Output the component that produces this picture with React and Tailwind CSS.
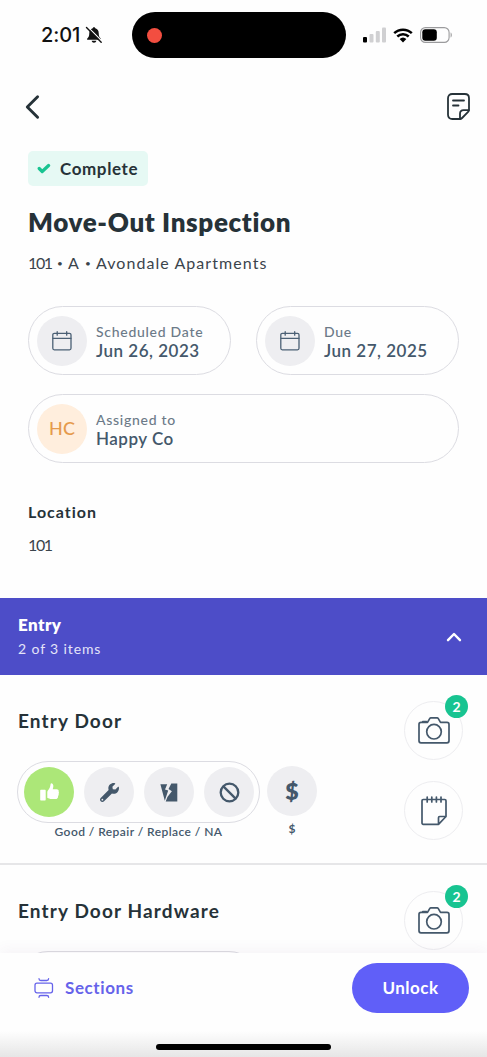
const ratings = ["good", "repair", "replace", "na"];

function StatusBar() {
  return (
    <div className="flex h-[70px] items-center">
      <div className="flex w-[132px] items-center pl-[41px]">
        <span className="w-[40px] whitespace-nowrap font-['Inter',sans-serif] text-[20px] font-medium leading-6 tracking-[-0.1px] text-[#111]">2:01</span>
        <svg className="ml-1 h-[18px] w-[18px]" viewBox="0 0 18 18">
          <path d="M9 1.200c.8 0 1.200.5 1.300 1.100 2.200.6 3.400 2.400 3.400 4.700 0 3.300.7 4.300 2 5.400.5.500.3 1.300-.5 1.300H2.800c-.8 0-1-.8-.5-1.300 1.300-1.100 2-2.100 2-5.400 0-2.300 1.200-4.100 3.400-4.700C7.800 1.700 8.200 1.200 9 1.200zM6.600 14.700h4.800c-.3 1.300-1.200 2-2.400 2s-2.100-.7-2.400-2z" fill="#111" />
          <path d="M3.200 1.400 17.800 16" stroke="#fff" strokeWidth="1.200" />
          <path d="M1.500 1.600 16.200 16.200" stroke="#111" strokeWidth="1.400" strokeLinecap="round" />
        </svg>
      </div>
      <div className="flex h-[46px] w-[214px] items-center rounded-full bg-black pl-[15px]">
        <span className="size-[15px] rounded-full bg-[#f24e40]" />
      </div>
      <div className="flex items-center pl-[17px]">
        <svg className="h-4 w-[23px]" viewBox="0 0 23 16">
          <rect x="0" y="10" width="4" height="5.500" rx="1" fill="#000" />
          <rect x="6.500" y="7" width="4" height="8.500" rx="1" fill="#d0d0d2" />
          <rect x="12.800" y="4" width="4" height="11.500" rx="1" fill="#d0d0d2" />
          <rect x="19" y="0.500" width="4" height="15" rx="1" fill="#d0d0d2" />
        </svg>
        <svg className="ml-[7px] h-[15px] w-[20px]" viewBox="0 0 20 15">
          <path d="M1.200 5.200a12.700 12.700 0 0 1 17.600 0M4.300 8.500a8.200 8.200 0 0 1 11.400 0" fill="none" stroke="#000" strokeWidth="2.500" />
          <path d="M6.600 11a5 5 0 0 1 6.800 0L10 14.500z" fill="#000" />
        </svg>
        <svg className="ml-[7px] h-[16px] w-[33px]" viewBox="0 0 33 16">
          <rect x="0.600" y="0.600" width="28.500" height="14.800" rx="4.800" fill="none" stroke="#9b9b9d" strokeWidth="1.100" />
          <rect x="2.300" y="2.300" width="14.500" height="11.400" rx="3" fill="#000" />
          <path d="M30.600 5.500c1.600.6 1.600 4.400 0 5z" fill="#9b9b9d" />
        </svg>
      </div>
    </div>
  );
}

function CalendarIcon() {
  return (
    <svg className="h-5 w-5" viewBox="0 0 20 20" fill="none" stroke="#4b6075" strokeWidth="1.300" strokeLinecap="round">
      <rect x="0.800" y="2.300" width="18.200" height="16.500" rx="1.500" />
      <path d="M1 7.300h18M5.200.7v3.500M14.700.7v3.500" />
    </svg>
  );
}

function CameraIcon() {
  return (
    <svg className="h-[27px] w-[32px]" viewBox="0 0 32 27" fill="none" stroke="#44586b" strokeWidth="1.700" strokeLinejoin="round" strokeLinecap="round">
      <path d="M3 5.400h6.500l2.200-3.800c.3-.5.700-.7 1.200-.7h6.200c.5 0 .9.200 1.200.7l2.200 3.800H29c1.200 0 2 .8 2 2v16.400c0 1.200-.8 2-2 2H3c-1.200 0-2-.8-2-2V7.400c0-1.200.8-2 2-2z" />
      <path d="M4.800 4.600h3.700" strokeWidth="1.800" />
      <circle cx="16" cy="14.700" r="7.300" />
    </svg>
  );
}

function NotepadIcon() {
  return (
    <svg className="h-[30px] w-[26px]" viewBox="0 0 26 30" fill="none" stroke="#44586b" strokeWidth="1.700" strokeLinejoin="round" strokeLinecap="round">
      <path d="M17.500 28.300H2.200c-.7 0-1.200-.5-1.200-1.200V4.700c0-.7.500-1.200 1.200-1.200h21.600c.7 0 1.200.5 1.200 1.200v15.800zM17.500 28.300v-6.600c0-.7.500-1.200 1.200-1.200H25" />
      <path d="M6.200 1v5M10.800 1v5M15.400 1v5M20 1v5" />
    </svg>
  );
}

function RatingIcon({ type }) {
  if (type === "good") {
    return (
      <svg className="h-[18px] w-[19px]" viewBox="0 0 19 18" fill="#fff">
        <path d="M1.200 6.800h3.500c.6 0 1 .4 1 1v8.700c0 .6-.4 1-1 1H1.200c-.6 0-1-.4-1-1V7.800c0-.6.4-1 1-1z" />
        <path d="M7.300 9c0-.9.400-1.400 1-2.100C9.600 5.400 10.300 3.900 10.500 1.600c.1-1 .6-1.400 1.300-1.200 1.300.3 1.700 1.700 1.500 3.200-.1 1-.3 1.800-.6 2.600h4c1.500 0 2.300 1.200 1.900 2.300.4.600.5 1.500 0 2.200.3.900.1 1.700-.5 2.200.1 1.900-.8 3.200-2.800 3.200h-3.500c-2.300 0-3.200-1-4.500-1.400z" />
      </svg>
    );
  }
  if (type === "repair") {
    return (
      <svg className="h-[19px] w-[19px]" viewBox="0 0 512 512" fill="#44586b">
        <path d="M507.700 109.100c-2.200-9-13.500-12.100-20.100-5.500l-74.400 74.400-67.900-11.300L334 98.900l74.400-74.400c6.600-6.600 3.400-17.900-5.700-20.200-47.400-11.700-99.600.9-136.600 37.900-39.600 39.600-50.500 97.100-34.100 147.200L18.700 402.800c-25 25-25 65.500 0 90.500s65.500 25 90.500 0l213.200-213.200c50.100 16.700 107.500 5.700 147.400-34.200 37.100-37.100 49.700-89.300 37.900-136.800zM64 472a24 24 0 1 1 0-48 24 24 0 0 1 0 48z" />
      </svg>
    );
  }
  if (type === "replace") {
    return (
      <svg className="h-[19px] w-[18px]" viewBox="0 0 18 19" fill="#44586b">
        <path d="M.4 1.200h6.800L5 6.500l3.200 1-3.400 10.300z" />
        <path d="M11.300.4h6v18.200H5.700L7.400 14l4.500-5.800-3.400-2.200z" />
      </svg>
    );
  }
  return (
    <svg className="h-[21px] w-[21px]" viewBox="0 0 21 21" fill="none" stroke="#44586b" strokeWidth="2.300">
      <circle cx="10.500" cy="10.500" r="8.800" />
      <path d="M4.400 4.400l12.200 12.200" />
    </svg>
  );
}

function InfoPill({ label, value, extraClass, children }) {
  return (
    <div className={`flex h-[69px] items-center rounded-full border border-[#dcdce2] pl-2 ${extraClass}`}>
      {children}
      <div className="ml-[9px] whitespace-nowrap">
        <p className="text-[14px] font-medium leading-[19px] tracking-[0.720px] text-[#6c7a88]">{label}</p>
        <p className="text-[17px] font-semibold leading-[19px] tracking-[0.500px] text-[#44586b]">{value}</p>
      </div>
    </div>
  );
}

function RoundAction({ count, children }) {
  return (
    <div className="relative flex size-[59px] items-center justify-center rounded-full border border-[#ededf0]">
      {children}
      {count && (
        <span className="absolute -right-[6px] -top-[7px] flex size-[23px] items-center justify-center rounded-full bg-[#18c491] text-[14px] font-bold text-white">
          {count}
        </span>
      )}
    </div>
  );
}

function InspectionItem({ title }) {
  return (
    <section className="flex h-[190px] shrink-0 justify-between border-b-2 border-[#e6e6e8] pl-[17px] pr-6">
      <div>
        <h3 className="mt-[34px] pl-px text-[19px] font-bold leading-6 tracking-[1.130px] text-[#263238]">{title}</h3>
        <div className="mt-[28px] flex">
          <div className="w-[243px]">
            <div className="flex h-[62px] items-center gap-[10px] rounded-full border border-[#dcdce2] pl-[6px]">
              {ratings.map((type) => (
                <span
                  key={type}
                  className={`flex size-[50px] items-center justify-center rounded-full ${type === "good" ? "bg-[#ace778]" : "bg-[#eeeef1]"}`}
                >
                  <RatingIcon type={type} />
                </span>
              ))}
            </div>
            <p className="mt-px text-center text-[12px] font-semibold leading-4 tracking-[0.430px] text-[#44586b]">
              Good / Repair / Replace / NA
            </p>
          </div>
          <div className="ml-[7px] mt-[5px] w-[50px] text-center font-bold text-[#44586b]">
            <p className="size-[50px] rounded-full bg-[#eeeef1] text-[23px] font-extrabold leading-[50px]">$</p>
            <p className="mt-[5px] text-[12px] leading-4">$</p>
          </div>
        </div>
      </div>
      <div className="flex flex-col gap-[21px] pt-[26px]">
        <RoundAction count={2}><CameraIcon /></RoundAction>
        <RoundAction><NotepadIcon /></RoundAction>
      </div>
    </section>
  );
}

export default function App() {
  return (
    <main className="relative flex h-[1057px] w-[487px] flex-col overflow-hidden bg-[#fefefe] font-['Lato','Liberation_Sans',sans-serif] text-[#263238]">
      <StatusBar />

      <header className="flex h-[73px] items-center justify-between pl-[25px] pr-[17px]">
        <svg className="h-[26px] w-[16px]" viewBox="0 0 16 26" fill="none" stroke="#263238" strokeWidth="2.900" strokeLinecap="round" strokeLinejoin="round">
          <path d="M12.600 2.700 2.300 13 12.600 23.300" />
        </svg>
        <svg className="h-[27px] w-[23px]" viewBox="0 0 23 27" fill="none" stroke="#263238" strokeWidth="1.800" strokeLinecap="round" strokeLinejoin="round">
          <path d="M13 26H5.200C2.700 26 1 24.300 1 21.800V5.200C1 2.700 2.700 1 5.200 1h12.600C20.300 1 22 2.700 22 5.200v11.500c0 .8-.3 1.500-.9 2.100l-6 6.200c-.6.600-1.300 1-2.100 1z" />
          <path d="M13 25.800v-5c0-2.300 1.300-3.600 3.600-3.600h5.200M6 7.500h11M6 12.500h5.500" />
        </svg>
      </header>

      <section className="px-7 pt-2">
        <div className="flex h-[35px] w-[120px] items-center rounded-[5px] bg-[#e6f9f4] pl-[9px]">
          <svg className="h-[11px] w-[14px]" viewBox="0 0 14 11" fill="none" stroke="#18c491" strokeWidth="3.200" strokeLinecap="round" strokeLinejoin="round">
            <path d="M2.200 5.500 5.200 8.500 11.600 2.500" />
          </svg>
          <span className="ml-[9px] text-[17px] font-bold tracking-[0.600px]">Complete</span>
        </div>
        <h1 className="mt-[20px] whitespace-nowrap text-[26px] font-extrabold leading-8 tracking-[0.640px]">Move-Out Inspection</h1>
        <p className="mt-[13px] flex whitespace-nowrap text-[16px] leading-6 text-[#3b444c]">
          <span className="w-[29px] tracking-[-1.400px]">101</span>
          <span className="w-[11px] text-[10px]">•</span>
          <span className="w-[17px]">A</span>
          <span className="w-[11px] text-[10px]">•</span>
          <span className="tracking-[1.060px]">Avondale Apartments</span>
        </p>

        <div className="mt-[31px] flex gap-[25px]">
          <InfoPill label="Scheduled Date" value="Jun 26, 2023" extraClass="w-[203px]">
            <span className="flex size-[50px] items-center justify-center rounded-full bg-[#eeeef1]"><CalendarIcon /></span>
          </InfoPill>
          <InfoPill label="Due" value="Jun 27, 2025" extraClass="w-[203px]">
            <span className="flex size-[50px] items-center justify-center rounded-full bg-[#eeeef1]"><CalendarIcon /></span>
          </InfoPill>
        </div>
        <InfoPill label="Assigned to" value="Happy Co" extraClass="mt-[19px] w-[431px]">
          <span className="flex size-[50px] items-center justify-center rounded-full bg-[#ffeedd] text-[18px] font-medium text-[#e59a4c]">HC</span>
        </InfoPill>

        <h2 className="mt-[37px] text-[16px] font-bold leading-6 tracking-[1px]">Location</h2>
        <p className="mt-[9px] text-[16px] leading-6 tracking-[-1.400px] text-[#3b444c]">101</p>
      </section>

      <section className="mt-[41px] flex h-[77px] shrink-0 items-center justify-between bg-[#4d4dc8] pl-[18px] pr-[25px] text-white">
        <div>
          <h2 className="text-[17px] font-extrabold leading-6 tracking-[0.400px]">Entry</h2>
          <p className="text-[14px] leading-6 tracking-[0.880px] text-[#e4e4f8]">2 of 3 items</p>
        </div>
        <svg className="h-[10px] w-[16px]" viewBox="0 0 16 10" fill="none" stroke="#fff" strokeWidth="2.400" strokeLinecap="round" strokeLinejoin="round">
          <path d="M2 8.200 8 2l6 6.200" />
        </svg>
      </section>

      <InspectionItem title="Entry Door" />
      <InspectionItem title="Entry Door Hardware" />

      <footer className="absolute inset-x-0 bottom-0 flex h-[104px] flex-col items-center bg-linear-to-b from-[#fefefe] from-75% to-[#e6e6e6] shadow-[0_-4px_12px_rgba(90,60,110,0.05)]">
        <div className="flex w-full items-center justify-between pl-[34px] pr-[18px] pt-[10px]">
          <button className="flex items-center text-[#6663ea]">
            <svg className="h-[20px] w-[20px]" viewBox="0 0 20 20" fill="none" stroke="#6663ea" strokeWidth="1.300" strokeLinecap="round">
              <rect x="1" y="5.200" width="17.500" height="9.600" rx="2" />
              <path d="M5 .7c0 1.200.6 1.800 1.800 1.800h6c1.200 0 1.800-.6 1.800-1.800M5 19.300c0-1.200.6-1.800 1.800-1.800h6c1.200 0 1.800.6 1.800 1.800" />
            </svg>
            <span className="ml-[11px] text-[17px] font-bold tracking-[0.600px]">Sections</span>
          </button>
          <button className="h-[50px] w-[117px] rounded-full bg-[#605ff8] text-[17px] font-bold tracking-[0.500px] text-white">Unlock</button>
        </div>
        <span className="mt-[31px] h-[6px] w-[175px] rounded-full bg-black" />
      </footer>
    </main>
  );
}
